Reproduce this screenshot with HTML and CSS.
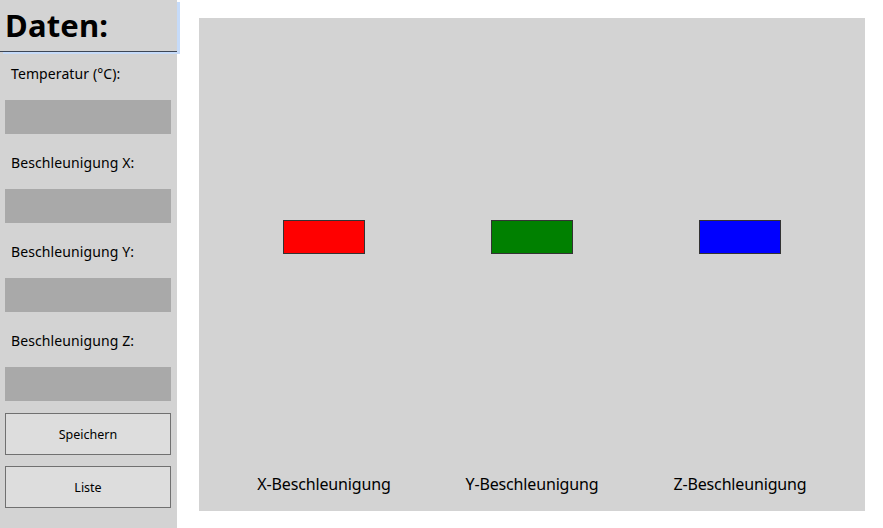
FILE: index.html
```html
<!DOCTYPE html>
<html lang="de">
<head>
<meta charset="utf-8">
<title>Daten</title>
<link rel="stylesheet" href="styles.css">
</head>
<body>
<div class="app">
  <aside class="sidebar">
    <div class="title">Daten:</div>
    <div class="label first">Temperatur (°C):</div>
    <div class="field"></div>
    <div class="label">Beschleunigung X:</div>
    <div class="field"></div>
    <div class="label">Beschleunigung Y:</div>
    <div class="field"></div>
    <div class="label">Beschleunigung Z:</div>
    <div class="field"></div>
    <button class="btn btn-first">Speichern</button>
    <button class="btn">Liste</button>
  </aside>
  <main class="panel">
    <div class="cols bars">
      <div class="bar red"></div>
      <div class="bar green"></div>
      <div class="bar blue"></div>
    </div>
    <div class="cols captions">
      <div class="caption">X-Beschleunigung</div>
      <div class="caption">Y-Beschleunigung</div>
      <div class="caption">Z-Beschleunigung</div>
    </div>
  </main>
</div>
</body>
</html>
```
FILE: styles.css
```css
html, body {
  margin: 0;
  padding: 0;
  background: #ffffff;
}
body {
  font-family: "Noto Sans", "Open Sans", sans-serif;
  color: #000;
}
.app {
  display: flex;
  width: 883px;
  height: 528px;
}
.sidebar {
  width: 177px;
  height: 528px;
  background: #d3d3d3;
  display: flex;
  flex-direction: column;
  flex-shrink: 0;
  position: relative;
}
.title {
  width: 172px;
  height: 51px;
  padding-left: 5px;
  border-bottom: 1px solid #3c4656;
  box-shadow: 3px 2px 0 #c6dbf9;
  font-size: 31px;
  font-weight: 700;
  line-height: 51px;
  letter-spacing: 0.2px;
  position: relative;
  z-index: 1;
}
.label {
  padding: 19px 0 16px 11px;
  font-size: 14px;
  line-height: 20px;
  letter-spacing: 0.1px;
}
.label.first {
  padding-top: 12px;
}
.field {
  margin: 0 6px 0 5px;
  height: 34px;
  background: #a9a9a9;
}
.btn {
  margin: 11px 6px 0 5px;
  height: 42px;
  border: 1px solid #707070;
  background: #dddddd;
  font-family: "Noto Sans", "Open Sans", sans-serif;
  font-size: 12.5px;
  letter-spacing: 0;
  color: #000;
  padding: 0;
}
.btn-first {
  margin-top: 12px;
}
.panel {
  margin: 18px 0 0 22px;
  width: 666px;
  height: 493px;
  background: #d3d3d3;
  display: flex;
  flex-direction: column;
}
.cols {
  display: grid;
  grid-template-columns: repeat(3, 208px);
  justify-content: center;
  justify-items: center;
}
.bars {
  margin-top: 202px;
}
.bar {
  width: 80px;
  height: 32px;
  border: 1px solid #333333;
}
.red { background: #ff0000; }
.green { background: #008000; }
.blue { background: #0000ff; }
.captions {
  margin-top: auto;
  margin-bottom: 16px;
}
.caption {
  font-size: 16px;
  line-height: 22px;
  letter-spacing: -0.15px;
}
```
